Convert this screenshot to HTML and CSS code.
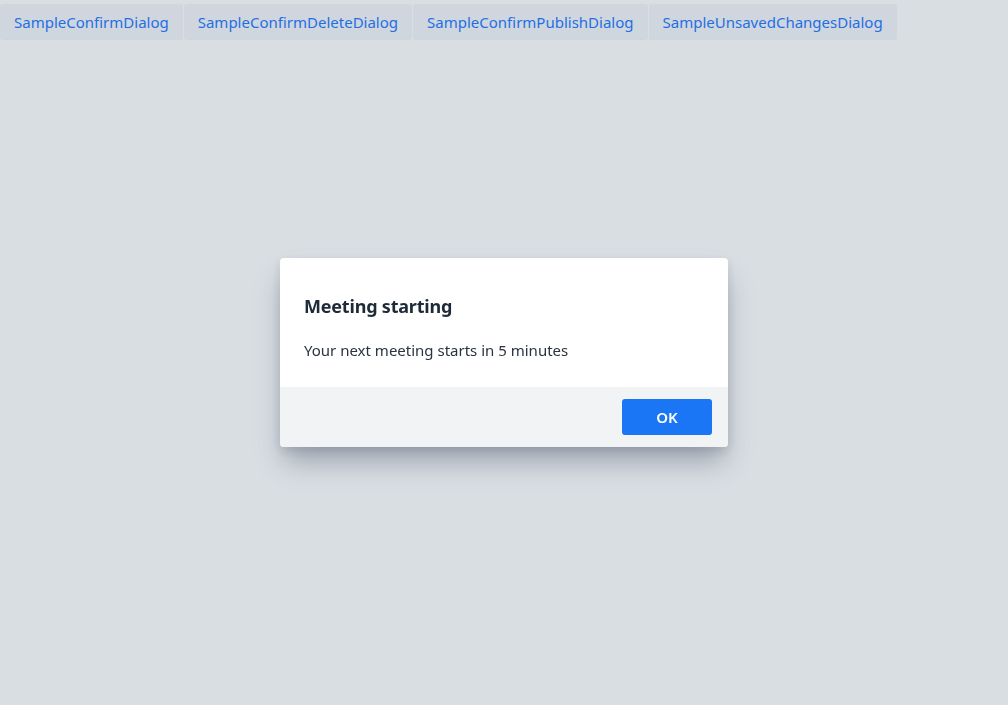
FILE: index.html
```html
<!DOCTYPE html>
<html lang="en">
<head>
<meta charset="utf-8">
<title>Dialogs</title>
<link rel="stylesheet" href="styles.css">
</head>
<body>
<nav class="tabs">
  <a class="tab" href="#">SampleConfirmDialog</a>
  <a class="tab" href="#">SampleConfirmDeleteDialog</a>
  <a class="tab" href="#">SampleConfirmPublishDialog</a>
  <a class="tab" href="#">SampleUnsavedChangesDialog</a>
</nav>
<div class="overlay">
  <div class="dialog" role="dialog">
    <div class="dialog-body">
      <h2 class="dialog-title">Meeting starting</h2>
      <p class="dialog-text">Your next meeting starts in 5 minutes</p>
    </div>
    <div class="dialog-footer">
      <button class="btn-primary">OK</button>
    </div>
  </div>
</div>
</body>
</html>
```
FILE: styles.css
```css
html, body {
  margin: 0;
  padding: 0;
  height: 100%;
}
body {
  background: #d9dee3;
  font-family: "Noto Sans", "Open Sans", sans-serif;
  color: #1f2937;
}
.tabs {
  display: flex;
  gap: 1px;
  padding-top: 4px;
}
.tab {
  display: flex;
  align-items: center;
  height: 36px;
  padding: 0 14px;
  background: #d0d6dd;
  border-radius: 3px;
  color: #1f6fe5;
  font-size: 15px;
  text-decoration: none;
}
.overlay {
  position: fixed;
  inset: 0;
  display: flex;
  align-items: center;
  justify-content: center;
}
.dialog {
  width: 448px;
  background: #fff;
  border-radius: 4px;
  overflow: hidden;
  box-shadow: 0 18px 26px -4px rgba(60, 75, 95, 0.4), 0 4px 10px rgba(60, 75, 95, 0.15);
}
.dialog-body {
  padding: 36px 24px 26px;
}
.dialog-title {
  margin: 0 0 21px;
  font-size: 18px;
  line-height: 24px;
  font-weight: 700;
  color: #1e2a38;
  letter-spacing: -0.2px;
}
.dialog-text {
  margin: 0;
  font-size: 15px;
  line-height: 22px;
  color: #2a3340;
}
.dialog-footer {
  display: flex;
  justify-content: flex-end;
  padding: 12px 16px;
  background: #f2f3f5;
}
.btn-primary {
  width: 90px;
  height: 36px;
  border: none;
  border-radius: 3px;
  background: #1a76f5;
  color: #fff;
  font-family: inherit;
  font-size: 15px;
  font-weight: 600;
  cursor: pointer;
}
```
